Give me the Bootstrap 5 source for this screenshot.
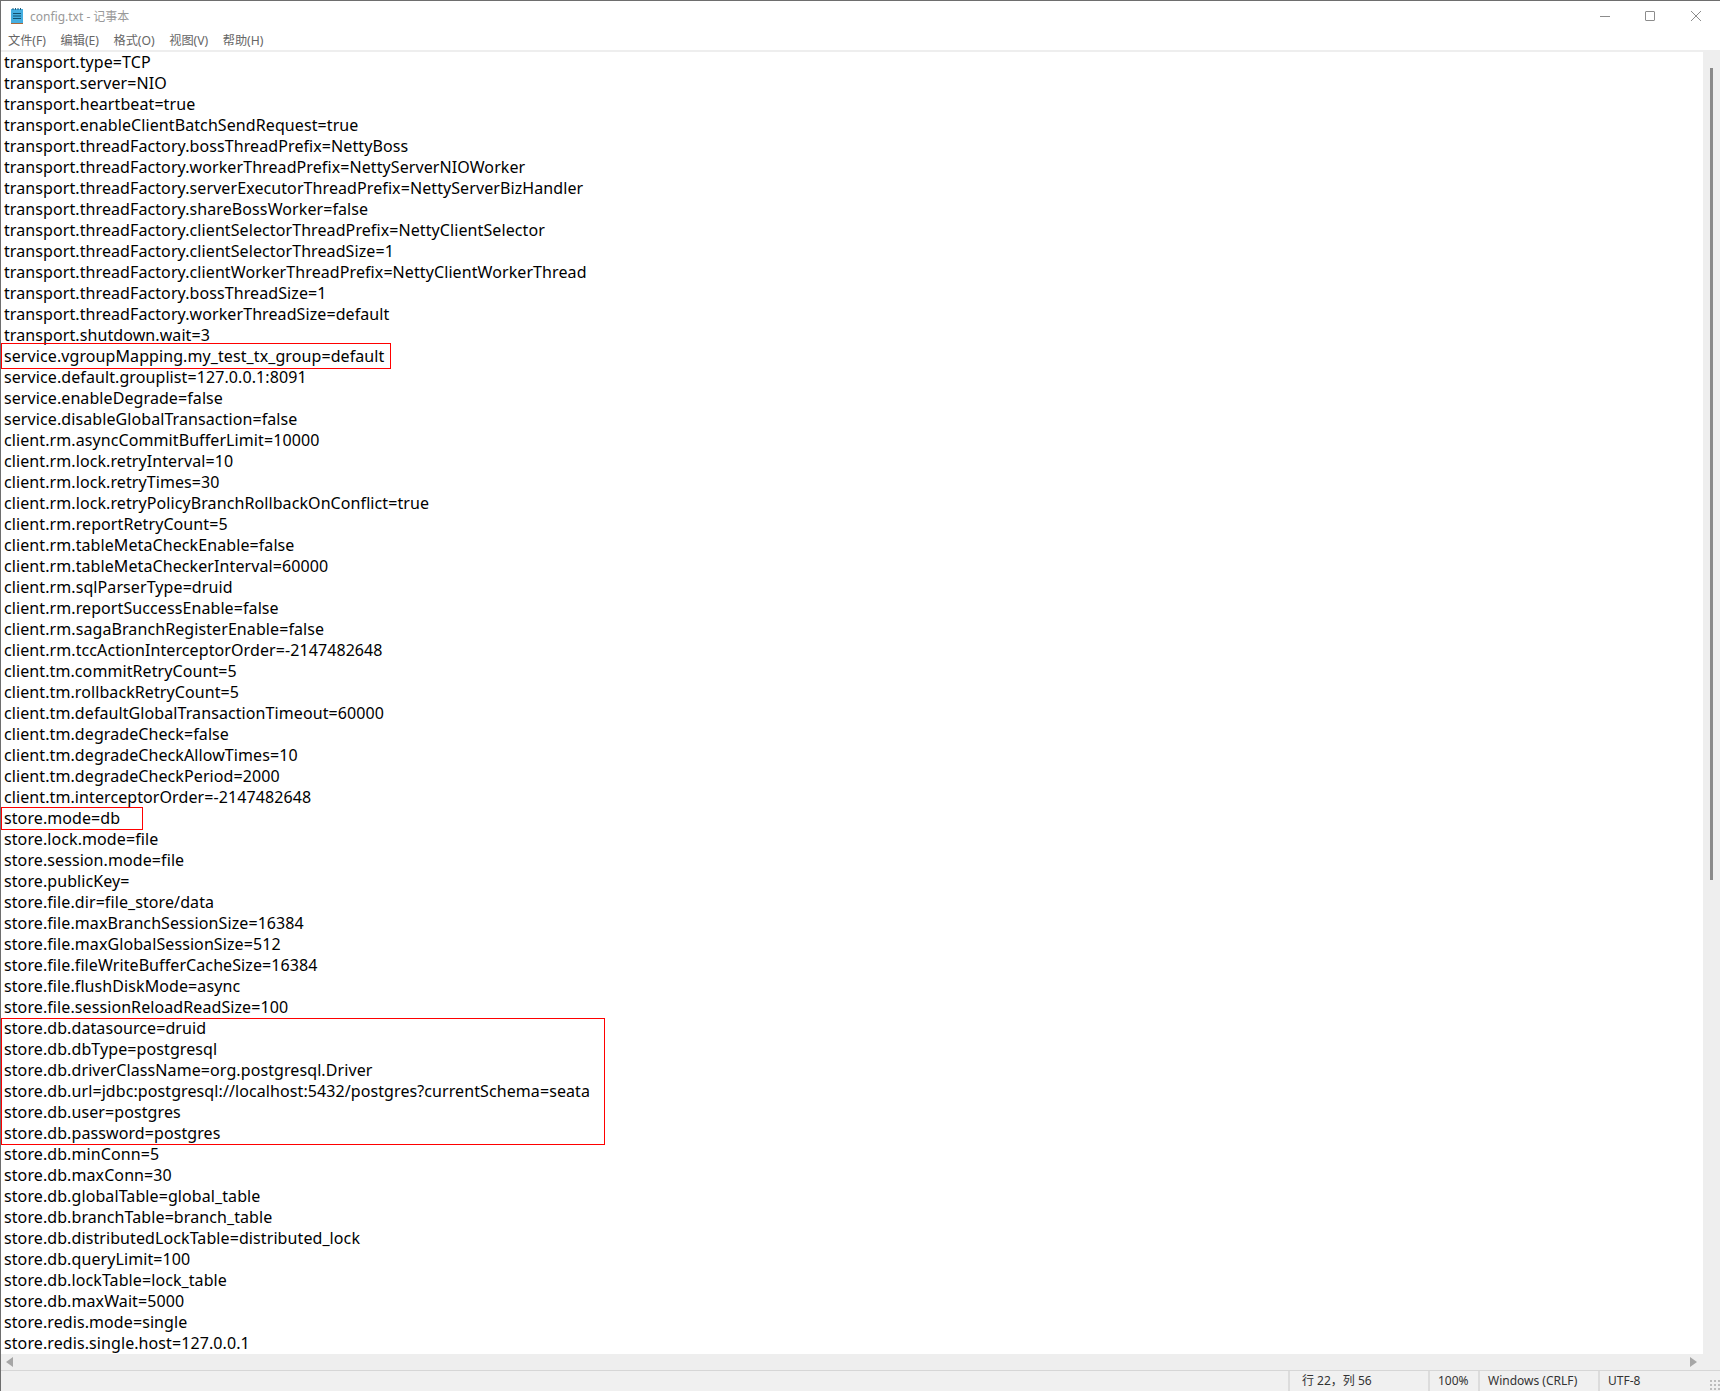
<!DOCTYPE html>
<html lang="zh-CN">
<head>
<meta charset="utf-8">
<title>config.txt - 记事本</title>
<link href="https://cdn.jsdelivr.net/npm/bootstrap@5.3.0/dist/css/bootstrap.min.css" rel="stylesheet">
<style>
html,body{height:100%;margin:0;overflow:hidden;background:#fff}
.win{height:1391px;border-top:1px solid #6e6e6e;border-left:1px solid #6e6e6e;font-family:"Noto Sans","Noto Sans CJK SC",sans-serif;color:#000}
.titlebar{height:29px;padding-left:9px;gap:6px;font-size:12px;color:#999}
.titletext{margin-top:2px}
.winbtns{padding-right:1.5px}
.winbtn{width:45.5px;height:29px}
.menubar{height:20px;padding-left:7px;gap:14.5px;font-size:12.2px;color:#666;line-height:22px}
.menurule{height:2px;background:#eee}
.midrow{min-height:0}
.editor{font-size:16px;line-height:21px;padding-left:3px;background:#fff;overflow:hidden;white-space:pre;letter-spacing:.09px}
.vscroll{width:17px;background:#eee;padding:16px 0 0 7px}
.vthumb{width:3px;height:812px;background:#8a8a8a}
.hscroll{height:16px;background:#eee;padding:0 23px 1px 5px}
.statusbar{height:21px;background:#f0f0f0;border-top:1px solid #d6d6d6;font-size:12px;color:#333}
.stcell{height:100%;border-left:2px solid #dcdcdc;padding-left:8px;line-height:20px}
.statw1{width:140px;padding-left:12px}.statw2{width:50px}.statw3{width:120px}.statw4{width:122px}
.marker{position:absolute;border:1px solid #f00;pointer-events:none}
.mk1{left:0;top:342px;width:390px;height:26px}
.mk2{left:0;top:806px;width:142px;height:23px}
.mk3{left:0;top:1017px;width:604px;height:127px}
.grip{width:11px;height:11px;margin-left:auto;margin-top:8px;background-image:radial-gradient(#bdbdbd 1px,transparent 1.2px);background-size:4px 4px}
.fade{position:absolute;top:0;right:0;width:16px;height:1391px;background:linear-gradient(to right,rgba(180,180,180,0),rgba(170,170,170,.28));pointer-events:none}
</style>
</head>
<body>
<div class="win d-flex flex-column position-relative">
  <div class="titlebar d-flex align-items-center flex-shrink-0">
    <svg width="14" height="17" viewBox="0 0 14 17"><rect x="1" y="2" width="12" height="14" fill="#45aee0"/><rect x="1" y="16" width="12" height="1" fill="#a9693c"/><path d="M3 1v2M5.500 1v2M8 1v2M10.500 1v2" stroke="#1d5f80" stroke-width="1"/><path d="M3 6.500h8M3 9h8M3 11.500h8" stroke="#12506e" stroke-width="1"/></svg>
    <span class="titletext">config.txt - 记事本</span>
    <div class="winbtns d-flex ms-auto">
      <div class="winbtn d-flex align-items-center justify-content-center"><svg width="12" height="12" viewBox="0 0 12 12"><path d="M1 6.500h10" stroke="#8c8c8c"/></svg></div>
      <div class="winbtn d-flex align-items-center justify-content-center"><svg width="12" height="12" viewBox="0 0 12 12"><rect x="1.500" y="1.500" width="9" height="9" rx=".5" fill="none" stroke="#8c8c8c"/></svg></div>
      <div class="winbtn d-flex align-items-center justify-content-center"><svg width="12" height="12" viewBox="0 0 12 12"><path d="M1 1l10 10M11 1L1 11" stroke="#8c8c8c"/></svg></div>
    </div>
  </div>
  <div class="menubar d-flex flex-shrink-0">
    <span>文件(F)</span><span>编辑(E)</span><span>格式(O)</span><span>视图(V)</span><span>帮助(H)</span>
  </div>
  <div class="menurule flex-shrink-0"></div>
  <div class="midrow d-flex flex-grow-1">
    <div class="editor flex-grow-1"><div>transport.type=TCP</div><div>transport.server=NIO</div><div>transport.heartbeat=true</div><div>transport.enableClientBatchSendRequest=true</div><div>transport.threadFactory.bossThreadPrefix=NettyBoss</div><div>transport.threadFactory.workerThreadPrefix=NettyServerNIOWorker</div><div>transport.threadFactory.serverExecutorThreadPrefix=NettyServerBizHandler</div><div>transport.threadFactory.shareBossWorker=false</div><div>transport.threadFactory.clientSelectorThreadPrefix=NettyClientSelector</div><div>transport.threadFactory.clientSelectorThreadSize=1</div><div>transport.threadFactory.clientWorkerThreadPrefix=NettyClientWorkerThread</div><div>transport.threadFactory.bossThreadSize=1</div><div>transport.threadFactory.workerThreadSize=default</div><div>transport.shutdown.wait=3</div><div>service.vgroupMapping.my_test_tx_group=default</div><div>service.default.grouplist=127.0.0.1:8091</div><div>service.enableDegrade=false</div><div>service.disableGlobalTransaction=false</div><div>client.rm.asyncCommitBufferLimit=10000</div><div>client.rm.lock.retryInterval=10</div><div>client.rm.lock.retryTimes=30</div><div>client.rm.lock.retryPolicyBranchRollbackOnConflict=true</div><div>client.rm.reportRetryCount=5</div><div>client.rm.tableMetaCheckEnable=false</div><div>client.rm.tableMetaCheckerInterval=60000</div><div>client.rm.sqlParserType=druid</div><div>client.rm.reportSuccessEnable=false</div><div>client.rm.sagaBranchRegisterEnable=false</div><div>client.rm.tccActionInterceptorOrder=-2147482648</div><div>client.tm.commitRetryCount=5</div><div>client.tm.rollbackRetryCount=5</div><div>client.tm.defaultGlobalTransactionTimeout=60000</div><div>client.tm.degradeCheck=false</div><div>client.tm.degradeCheckAllowTimes=10</div><div>client.tm.degradeCheckPeriod=2000</div><div>client.tm.interceptorOrder=-2147482648</div><div>store.mode=db</div><div>store.lock.mode=file</div><div>store.session.mode=file</div><div>store.publicKey=</div><div>store.file.dir=file_store/data</div><div>store.file.maxBranchSessionSize=16384</div><div>store.file.maxGlobalSessionSize=512</div><div>store.file.fileWriteBufferCacheSize=16384</div><div>store.file.flushDiskMode=async</div><div>store.file.sessionReloadReadSize=100</div><div>store.db.datasource=druid</div><div>store.db.dbType=postgresql</div><div>store.db.driverClassName=org.postgresql.Driver</div><div>store.db.url=jdbc:postgresql://localhost:5432/postgres?currentSchema=seata</div><div>store.db.user=postgres</div><div>store.db.password=postgres</div><div>store.db.minConn=5</div><div>store.db.maxConn=30</div><div>store.db.globalTable=global_table</div><div>store.db.branchTable=branch_table</div><div>store.db.distributedLockTable=distributed_lock</div><div>store.db.queryLimit=100</div><div>store.db.lockTable=lock_table</div><div>store.db.maxWait=5000</div><div>store.redis.mode=single</div><div>store.redis.single.host=127.0.0.1</div></div>
    <div class="vscroll flex-shrink-0"><div class="vthumb"></div></div>
  </div>
  <div class="hscroll d-flex align-items-center justify-content-between flex-shrink-0">
    <svg width="7" height="10" viewBox="0 0 7 10"><path d="M7 0v10L0 5z" fill="#a6a6a6"/></svg>
    <svg width="7" height="10" viewBox="0 0 7 10"><path d="M0 0v10l7-5z" fill="#a6a6a6"/></svg>
  </div>
  <div class="statusbar d-flex flex-shrink-0">
    <div class="stcell ms-auto statw1">行 22，列 56</div>
    <div class="stcell statw2">100%</div>
    <div class="stcell statw3">Windows (CRLF)</div>
    <div class="stcell statw4 d-flex">UTF-8<span class="grip"></span></div>
  </div>
  <div class="marker mk1"></div>
  <div class="marker mk2"></div>
  <div class="marker mk3"></div>
  <div class="fade"></div>
</div>
</body>
</html>
